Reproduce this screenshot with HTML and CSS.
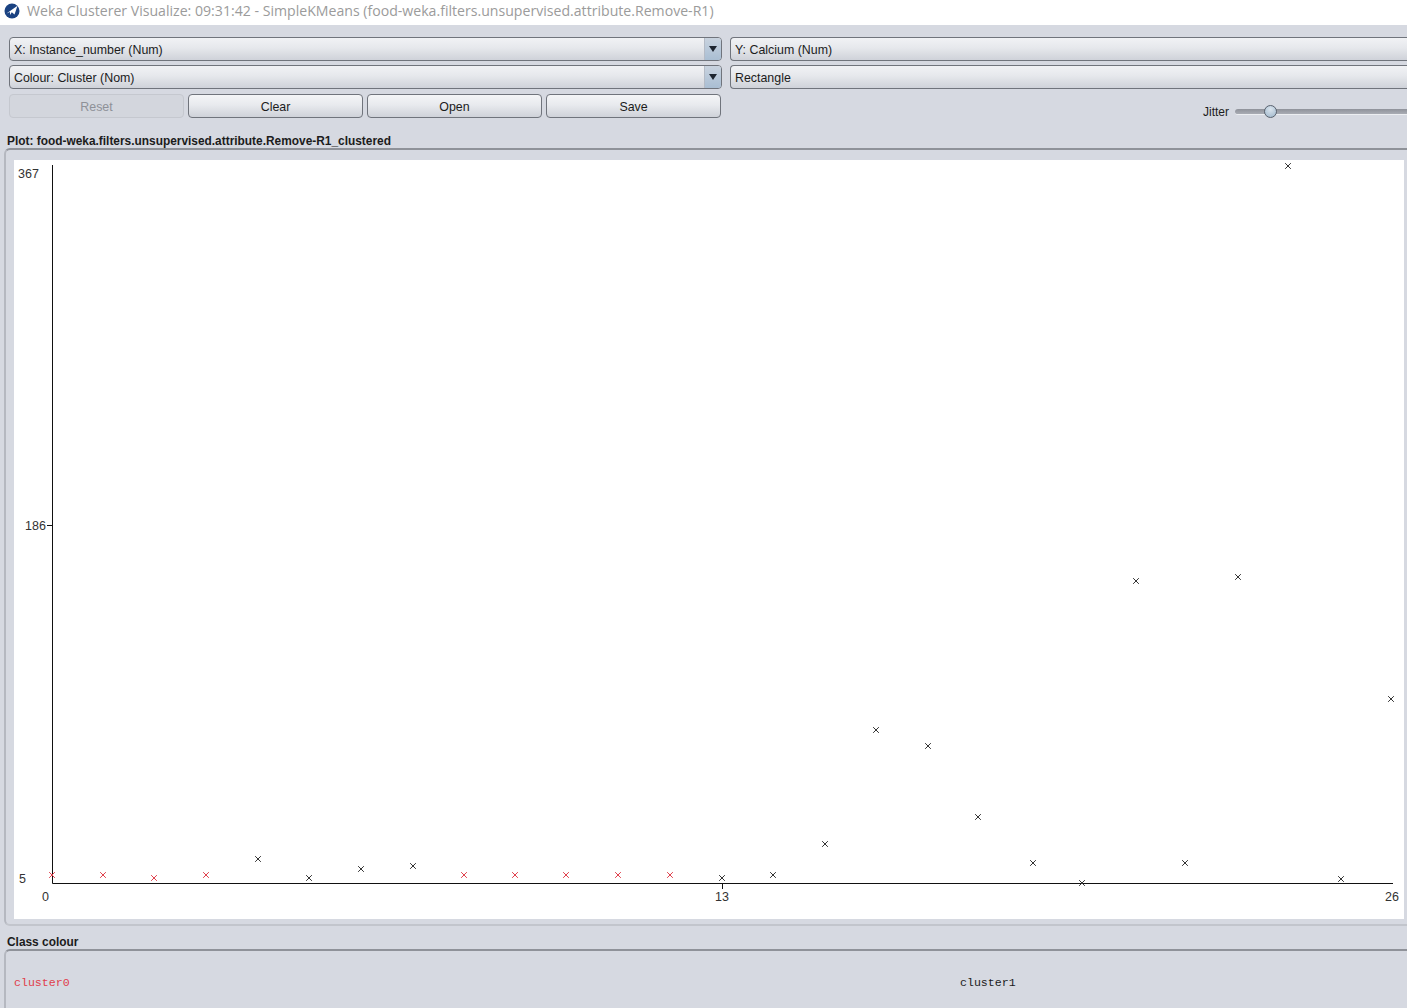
FILE: index.html
```html
<!DOCTYPE html>
<html lang="en">
  <head>
    <meta charset="utf-8">
    <title>Weka Clusterer Visualize</title>
    <link rel="stylesheet" href="styles.css">
  </head>
  <body>
    <header class="titlebar">
      <svg class="app-icon" width="16" height="16" viewBox="0 0 16 16">
        <circle cx="8" cy="8" r="7.5" fill="#1a4282"/>
        <path d="M2.5 10.5 L13.5 2.8 L10.5 11.5 L7.8 9.2 L6 12 L6 9 Z" fill="#fff"/>
      </svg>
      <span>Weka Clusterer Visualize: 09:31:42 - SimpleKMeans (food-weka.filters.unsupervised.attribute.Remove-R1)</span>
    </header>

    <section class="controls">
      <div class="left-controls">
        <div class="combo"><span>X: Instance_number (Num)</span><i class="arrow"></i></div>
        <div class="combo"><span>Colour: Cluster (Nom)</span><i class="arrow"></i></div>
        <div class="buttons">
          <button class="btn" disabled>Reset</button>
          <button class="btn">Clear</button>
          <button class="btn">Open</button>
          <button class="btn">Save</button>
        </div>
      </div>
      <div class="right-controls">
        <div class="combo combo-plain"><span>Y: Calcium (Num)</span></div>
        <div class="combo combo-plain"><span>Rectangle</span></div>
        <div class="jitter">
          <span>Jitter</span>
          <div class="slider"><i class="thumb"></i></div>
        </div>
      </div>
    </section>

    <h2 class="group-title plot-title">Plot: food-weka.filters.unsupervised.attribute.Remove-R1_clustered</h2>
    <section class="group plot-group">
      <svg class="plot" width="1390" height="759" viewBox="14 160 1390 759">
        <path class="axis" d="M52.5 165V883.5H1393M47 525.5H52M722.5 883V889"/>
        <text x="18" y="178">367</text>
        <text x="25" y="530">186</text>
        <text x="19" y="883">5</text>
        <text x="42" y="901">0</text>
        <text x="715" y="901">13</text>
        <text x="1385" y="901">26</text>
        <!-- cluster0 -->
        <path class="mark-red" d="M49.5 872.5l5 5m0-5l-5 5M100.5 872.5l5 5m0-5l-5 5M151.5 875.5l5 5m0-5l-5 5M203.5 872.5l5 5m0-5l-5 5M461.5 872.5l5 5m0-5l-5 5M512.5 872.5l5 5m0-5l-5 5M563.5 872.5l5 5m0-5l-5 5M615.5 872.5l5 5m0-5l-5 5M667.5 872.5l5 5m0-5l-5 5"/>
        <!-- cluster1 -->
        <path class="mark-black" d="M255.5 856.5l5 5m0-5l-5 5M306.5 875.5l5 5m0-5l-5 5M358.5 866.5l5 5m0-5l-5 5M410.5 863.5l5 5m0-5l-5 5M719.5 875.5l5 5m0-5l-5 5M770.5 872.5l5 5m0-5l-5 5M822.5 841.5l5 5m0-5l-5 5M873.5 727.5l5 5m0-5l-5 5M925.5 743.5l5 5m0-5l-5 5M975.5 814.5l5 5m0-5l-5 5M1030.5 860.5l5 5m0-5l-5 5M1079.5 880.5l5 5m0-5l-5 5M1133.5 578.5l5 5m0-5l-5 5M1182.5 860.5l5 5m0-5l-5 5M1235.5 574.5l5 5m0-5l-5 5M1285.5 163.5l5 5m0-5l-5 5M1338.5 876.5l5 5m0-5l-5 5M1388.5 696.5l5 5m0-5l-5 5"/>
      </svg>
    </section>

    <h2 class="group-title class-title">Class colour</h2>
    <section class="group legend">
      <span class="legend-item red">cluster0</span>
      <span class="legend-item">cluster1</span>
    </section>
  </body>
</html>
```

FILE: styles.css
```css
html {
  font-family: "Liberation Sans", Arial, sans-serif;
}

body {
  margin: 0;
  height: 1008px;
  overflow: hidden;
  background: #d6d9e1;
  color: #1c1c1c;
  font-size: 12.4px;
}

.titlebar {
  height: 25px;
  box-sizing: border-box;
  padding: 0 0 4px 4px;
  background: #fff;
  display: flex;
  align-items: center;
  gap: 7px;
  color: #9b9b9b;
  font-family: "Open Sans", sans-serif;
  font-size: 14.12px;
  white-space: nowrap;
}

.app-icon {
  flex: none;
}

.controls {
  display: flex;
  gap: 8px;
  padding: 12px 0 0 9px;
  height: 111px;
  box-sizing: border-box;
}

.left-controls {
  flex: none;
  width: 713px;
}

.right-controls {
  flex: 1;
  min-width: 0;
}

.combo {
  height: 24px;
  box-sizing: border-box;
  margin-bottom: 4px;
  display: flex;
  align-items: center;
  justify-content: space-between;
  padding-left: 4px;
  border: 1px solid #70747c;
  border-radius: 4px;
  background: linear-gradient(#f1f2f5, #e6e8ec 45%, #cfd2d9);
  overflow: hidden;
}

.combo span {
  padding-top: 2px;
}

.combo-plain {
  border-right: 0;
  border-radius: 4px 0 0 4px;
}

.arrow {
  width: 16px;
  height: 100%;
  position: relative;
  background: linear-gradient(#c9d3df, #a9bed3);
  border-left: 1px solid #b4bbc6;
}

.arrow::after {
  content: "";
  position: absolute;
  left: 4px;
  top: 8px;
  border-left: 4px solid transparent;
  border-right: 4px solid transparent;
  border-top: 6px solid #1d2530;
}

.buttons {
  display: flex;
  gap: 4px;
  margin-top: 5px;
}

.btn {
  width: 175px;
  height: 24px;
  padding: 2px 0 0;
  border: 1px solid #70747c;
  border-radius: 4px;
  background: linear-gradient(#f4f5f7, #e8eaee 45%, #cfd2d9);
  color: #1c1c1c;
  font-family: inherit;
  font-size: 12.4px;
}

.btn:disabled {
  border-color: #c5c8cf;
  background: #d3d6dd;
  color: #8e9198;
}

.jitter {
  display: flex;
  align-items: center;
  margin: 16px 0 0 473px;
  gap: 6px;
  font-size: 12px;
}

.slider {
  flex: 1;
  height: 5px;
  position: relative;
  border-radius: 3px 0 0 3px;
  background: linear-gradient(#8f929a, #a9acb4);
  border-bottom: 1px solid #eceef1;
}

.thumb {
  position: absolute;
  left: 29px;
  top: -4px;
  width: 11px;
  height: 11px;
  border: 1px solid #59626e;
  border-radius: 50%;
  background: radial-gradient(circle at 50% 30%, #dbe5ee, #9db5ca);
}

.group-title {
  margin: 0;
  font-size: 11.9px;
  font-weight: bold;
  line-height: 14px;
  padding-left: 7px;
  white-space: nowrap;
}

.plot-title {
  margin-top: -2px;
}

.group {
  border: 2px solid #8f9299;
  border-left-color: #b5b8c0;
  border-right: 0;
  border-bottom-color: #c2c5cc;
  border-radius: 6px 0 0 6px;
  margin-left: 4px;
}

.plot-group {
  height: 778px;
  box-sizing: border-box;
  padding: 10px 0 0 8px;
}

.plot {
  display: block;
  background: #fff;
}

.plot text {
  font-family: "Liberation Sans", sans-serif;
  font-size: 12.5px;
  fill: #333;
}

.axis {
  fill: none;
  stroke: #111;
  stroke-width: 1;
}

.mark-red,
.mark-black {
  fill: none;
  stroke-width: 1;
  stroke-linecap: square;
}

.mark-red {
  stroke: #e0404c;
}

.mark-black {
  stroke: #333;
}

.class-title {
  margin-top: 9px;
}

.legend {
  height: 70px;
  border-bottom: 0;
  border-radius: 6px 0 0 0;
  display: flex;
  align-items: flex-start;
  padding: 25px 0 0 8px;
}

.legend-item {
  font-family: "Liberation Mono", monospace;
  font-size: 11.6px;
  line-height: 14px;
}

.legend-item.red {
  flex: none;
  width: 946px;
  color: #e0404c;
}
```
